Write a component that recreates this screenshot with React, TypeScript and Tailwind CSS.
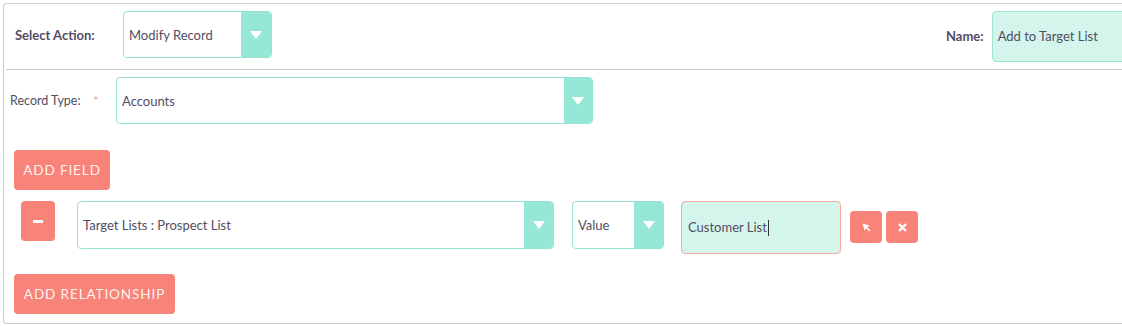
const Arrow = () => (
  <svg width="12" height="8" viewBox="0 0 12 8" className="block">
    <path d="M0 0 L12 0 L6 8 Z" fill="#ffffff" />
  </svg>
);

function SelectBox({ value, width, height, dropWidth = 30 }: { value: string; width: string; height: string; dropWidth?: number }) {
  return (
    <div className={`${width} ${height} flex shrink-0 overflow-hidden rounded-[4px] border border-[#95e3d1] bg-white`}>
      <div className="flex flex-1 items-center pl-[5px] pt-[2px] text-[13px] text-[#534d64]">{value}</div>
      <div className="flex items-center justify-center bg-[#96e7d5]" style={{ width: dropWidth }}>
        <Arrow />
      </div>
    </div>
  );
}

export default function App() {
  return (
    <div className="h-[326px] w-[1122px] overflow-hidden bg-white font-['Lato','Open_Sans',sans-serif]">
      <div className="ml-[3px] mt-[3px] h-[321px] w-[1160px] rounded-[4px] border border-t-[#cbcfd3] border-[#c3cbd3]">
        {/* action row */}
        <div className="flex h-[65px] items-start pt-[7px]">
          <div className="flex h-[47px] w-[119px] shrink-0 items-center pl-[11px] pt-[3px] text-[13px] font-bold text-[#534d64]">
            Select Action:
          </div>
          <SelectBox value="Modify Record" width="w-[149px]" height="h-[47px]" />
          <div className="ml-[674px] flex h-[51px] shrink-0 items-center pt-[1px] text-[13px] font-bold text-[#534d64]">Name:</div>
          <div className="ml-[8px] flex h-[51px] w-[150px] shrink-0 items-center rounded-[4px] border border-[#9fe5d4] bg-[#d4f5ec] pl-[5px] pt-[1px] text-[13px] text-[#534d64]">
            Add to Target List
          </div>
        </div>
        <div className="ml-[2px] h-px bg-[#c8ccd0]" />

        {/* record type */}
        <div className="flex items-start pt-[7px]">
          <div className="flex h-[47px] w-[112px] shrink-0 items-center pl-[6px] pt-[2px] text-[12.5px] text-[#534d64]">
            Record Type:
            <span className="ml-[13px] text-[11px] text-[#f08a80]">*</span>
          </div>
          <SelectBox value="Accounts" width="w-[477px]" height="h-[47px]" dropWidth={28} />
        </div>

        <button className="ml-[10px] mt-[26px] flex h-[40px] w-[96px] items-center justify-center rounded-[4px] bg-[#f88379] pt-[1px] text-[13.5px] tracking-[0.9px] text-[#fff3f0]">
          ADD FIELD
        </button>

        {/* field row */}
        <div className="mt-[11px] flex items-start">
          <button className="ml-[17px] flex h-[40px] w-[34px] shrink-0 items-center justify-center rounded-[4px] bg-[#f88379]">
            <span className="block h-[3px] w-[10px] bg-white" />
          </button>
          <div className="ml-[22px]">
            <SelectBox value="Target Lists : Prospect List" width="w-[477px]" height="h-[48px]" dropWidth={29} />
          </div>
          <div className="ml-[18px]">
            <SelectBox value="Value" width="w-[92px]" height="h-[48px]" dropWidth={29} />
          </div>
          <div className="ml-[17px] flex h-[53px] w-[160px] shrink-0 items-center rounded-[4px] border border-[#f5ab9d] bg-[#d4f5ec] pl-[6px] text-[13px] text-[#534d64]">
            Customer List
            <span className="ml-px inline-block h-[16px] w-px bg-[#333]" />
          </div>
          <button className="ml-[9px] mt-[10px] flex h-[32px] w-[32px] shrink-0 items-center justify-center rounded-[4px] bg-[#f88379]">
            <svg width="9" height="9" viewBox="0 0 9 9">
              <path d="M0.5 0.5 L8 2.8 L5.2 4 L8.5 7.5 L7.3 8.6 L4 5.2 L2.8 8 Z" fill="#ffffff" />
            </svg>
          </button>
          <button className="ml-[4px] mt-[10px] flex h-[32px] w-[32px] shrink-0 items-center justify-center rounded-[4px] bg-[#f88379]">
            <svg width="9" height="9" viewBox="0 0 9 9">
              <path d="M1 1 L8 8 M8 1 L1 8" stroke="#ffffff" strokeWidth="2.4" />
            </svg>
          </button>
        </div>

        <button className="ml-[10px] mt-[20px] flex h-[40px] w-[161px] items-center justify-center rounded-[4px] bg-[#f88379] pt-[1px] text-[13.5px] tracking-[0.9px] text-[#fff3f0]">
          ADD RELATIONSHIP
        </button>
      </div>
    </div>
  );
}
